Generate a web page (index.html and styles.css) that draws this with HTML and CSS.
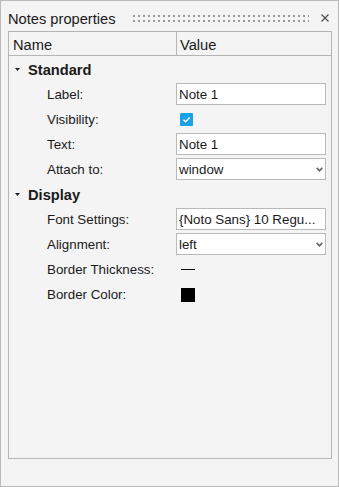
FILE: index.html
```html
<!DOCTYPE html>
<html lang="en">
  <head>
    <meta charset="UTF-8" />
    <title>Notes properties</title>
    <link rel="stylesheet" href="styles.css">
  </head>
  <body>
    <div class="panel">
      <div class="titlebar">
        <span class="title">Notes properties</span>
        <span class="grip"></span>
        <svg class="close" viewBox="0 0 8 8">
          <path d="M0.5 0.5 L7.5 7.5 M7.5 0.5 L0.5 7.5" stroke="#4a4a4a" stroke-width="1.1" fill="none" />
        </svg>
      </div>

      <div class="sheet">
        <div class="head">
          <div class="head-cell">Name</div>
          <div class="head-cell head-value">Value</div>
        </div>

        <div class="rows">
          <div class="section">
            <svg class="caret" viewBox="0 0 5 3"><polygon points="0,0 5,0 2.5,3" fill="#222" /></svg>
            Standard
          </div>
          <div class="row">
            <span class="label">Label:</span>
            <div class="value"><div class="field">Note 1</div></div>
          </div>
          <div class="row">
            <span class="label">Visibility:</span>
            <div class="value">
              <span class="check">
                <svg viewBox="0 0 13 13"><path d="M3.5 6.8 L5.6 8.8 L9.6 4.4" stroke="#fff" stroke-width="1.5" fill="none" /></svg>
              </span>
            </div>
          </div>
          <div class="row">
            <span class="label">Text:</span>
            <div class="value"><div class="field">Note 1</div></div>
          </div>
          <div class="row">
            <span class="label">Attach to:</span>
            <div class="value">
              <div class="field">
                window
                <svg class="arrow" viewBox="0 0 7 5"><path d="M0.7 0.8 L3.5 3.8 L6.3 0.8" stroke="#666" stroke-width="1.7" fill="none" /></svg>
              </div>
            </div>
          </div>

          <div class="section">
            <svg class="caret" viewBox="0 0 5 3"><polygon points="0,0 5,0 2.5,3" fill="#222" /></svg>
            Display
          </div>
          <div class="row">
            <span class="label">Font Settings:</span>
            <div class="value"><div class="field">{Noto Sans} 10 Regu...</div></div>
          </div>
          <div class="row">
            <span class="label">Alignment:</span>
            <div class="value">
              <div class="field">
                left
                <svg class="arrow" viewBox="0 0 7 5"><path d="M0.7 0.8 L3.5 3.8 L6.3 0.8" stroke="#666" stroke-width="1.7" fill="none" /></svg>
              </div>
            </div>
          </div>
          <div class="row">
            <span class="label">Border Thickness:</span>
            <div class="value"><span class="thickness"></span></div>
          </div>
          <div class="row">
            <span class="label">Border Color:</span>
            <div class="value"><span class="swatch"></span></div>
          </div>
        </div>
      </div>
    </div>
  </body>
</html>
```

FILE: styles.css
```css
body {
  margin: 0;
  background: #fff;
  font-family: "Liberation Sans", Arial, sans-serif;
  color: #1a1a1a;
}

.panel {
  width: 339px;
  height: 487px;
  box-sizing: border-box;
  border: 1px solid #bababa;
  background: #f4f4f4;
  display: flex;
  flex-direction: column;
}

.titlebar {
  height: 30px;
  display: flex;
  align-items: flex-start;
  padding-left: 7px;
}

.title {
  font-size: 14.67px;
  line-height: 17px;
  margin-top: 10px;
}

.grip {
  width: 176px;
  height: 7px;
  margin: 14px 0 0 auto;
  background-image: linear-gradient(to right, #9a9a9a 2px, transparent 2px),
    linear-gradient(to right, #9a9a9a 2px, transparent 2px);
  background-size: 5px 2px;
  background-position: 0 0, 0 5px;
  background-repeat: repeat-x;
}

.close {
  width: 8px;
  height: 8px;
  margin: 13px 9px 0 12px;
}

.sheet {
  flex: 1;
  margin: 0 6px 27px 7px;
  border: 1px solid #b5b5b5;
}

.head {
  display: grid;
  grid-template-columns: 167px 1fr;
  height: 23px;
  border-bottom: 1px solid #b5b5b5;
  font-size: 14.67px;
}

.head-cell {
  padding: 4px 0 0 4px;
  line-height: 19px;
}

.head-value {
  border-left: 1px solid #b5b5b5;
  padding-left: 3px;
}

.rows {
  padding-top: 1px;
}

.section {
  height: 25px;
  display: flex;
  align-items: center;
  padding-left: 6px;
  font-size: 14.67px;
  font-weight: bold;
}

.caret {
  width: 5px;
  height: 3px;
  margin-right: 8px;
}

.row {
  display: grid;
  grid-template-columns: 167px 1fr;
  height: 25px;
  align-items: center;
  font-size: 13.33px;
}

.label {
  padding-left: 38px;
}

.value {
  display: flex;
  align-items: center;
  padding-right: 5px;
}

.field {
  flex: 1;
  height: 22px;
  margin-top: -1px;
  box-sizing: border-box;
  border: 1px solid #b9b9b9;
  background: #fff;
  padding-left: 2px;
  display: flex;
  align-items: center;
  justify-content: space-between;
}

.arrow {
  width: 7px;
  height: 5px;
  margin-right: 2px;
}

.check {
  width: 13px;
  height: 13px;
  margin-left: 4px;
  background: #1aa1e6;
  border-radius: 1px;
  display: flex;
}

.check svg {
  width: 13px;
  height: 13px;
}

.thickness {
  width: 14px;
  height: 1px;
  margin-left: 5px;
  background: #111;
}

.swatch {
  width: 14px;
  height: 14px;
  margin-left: 5px;
  background: #000;
}
```
